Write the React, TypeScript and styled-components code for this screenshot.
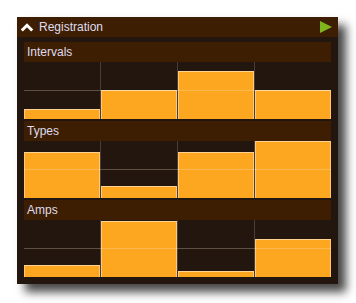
import React from 'react';
import styled, { createGlobalStyle } from 'styled-components';

const GlobalStyle = createGlobalStyle`
  html, body {
    margin: 0;
    padding: 0;
    background: #ffffff;
  }
  body {
    font-family: 'Liberation Sans', Arial, sans-serif;
  }
`;

// Styles
const Page = styled.div`
  width: 356px;
  height: 303px;
  padding: 17px 0 0 17px;
  box-sizing: border-box;
`;

const Panel = styled.div`
  width: 321px;
  height: 267px;
  background: #22160e;
  box-shadow: 8px 8px 9px rgba(0, 0, 0, 0.72);
  display: flex;
  flex-direction: column;
`;

const Header = styled.div`
  height: 20px;
  background: #3e1e02;
  display: flex;
  align-items: center;
  padding: 0 6px 0 3px;
  gap: 5px;
  color: #dedcee;
  font-size: 12px;
`;

const Title = styled.span`
  flex: 1;
  line-height: 20px;
`;

const Body = styled.div`
  flex: 1;
  padding: 5px 7px 0 7px;
  display: flex;
  flex-direction: column;
  gap: 2px;
`;

const Section = styled.div`
  display: flex;
  flex-direction: column;
`;

const SectionHeader = styled.div`
  height: 20px;
  line-height: 20px;
  background: #3e1e02;
  color: #dedcee;
  font-size: 12px;
  padding-left: 3px;
`;

const Chart = styled.div`
  position: relative;
  height: 57px;
  display: flex;
  background: #22160e;
`;

const Column = styled.div<{ $first?: boolean }>`
  flex: 1;
  display: flex;
  align-items: flex-end;
  border-left: ${(p) => (p.$first ? 'none' : '1px solid #4a3f37')};
`;

const Bar = styled.div`
  width: 100%;
  box-sizing: border-box;
  background: #fda620;
  border-top: 1px solid #fed393;
  border-left: 1px solid #fbc87e;
  border-right: 1px solid #fbc87e;
`;

const MidLine = styled.div`
  position: absolute;
  left: 0;
  right: 0;
  top: 28px;
  height: 1px;
  background: rgba(255, 235, 210, 0.28);
  pointer-events: none;
`;

// Data
const sections = [
  { name: 'Intervals', values: [10, 29, 48, 29] },
  { name: 'Types', values: [46, 12, 46, 57] },
  { name: 'Amps', values: [12, 56, 6, 38] },
];

// Component
const App = () => {
  return (
    <Page>
      <GlobalStyle />
      <Panel>
        <Header>
          <svg width="14" height="12" viewBox="0 0 14 12">
            <path d="M1.8 9.5 L7 4.3 L12.2 9.5" fill="none" stroke="#ffffff" strokeWidth="3" />
          </svg>
          <Title>Registration</Title>
          <svg width="12" height="12" viewBox="0 0 12 12">
            <polygon points="0,0 12,6 0,12" fill="#7eb51c" />
          </svg>
        </Header>
        <Body>
          {sections.map((s) => (
            <Section key={s.name}>
              <SectionHeader>{s.name}</SectionHeader>
              <Chart>
                {s.values.map((v, i) => (
                  <Column key={i} $first={i === 0}>
                    <Bar style={{ height: v }} />
                  </Column>
                ))}
                <MidLine />
              </Chart>
            </Section>
          ))}
        </Body>
      </Panel>
    </Page>
  );
};

export default App;
